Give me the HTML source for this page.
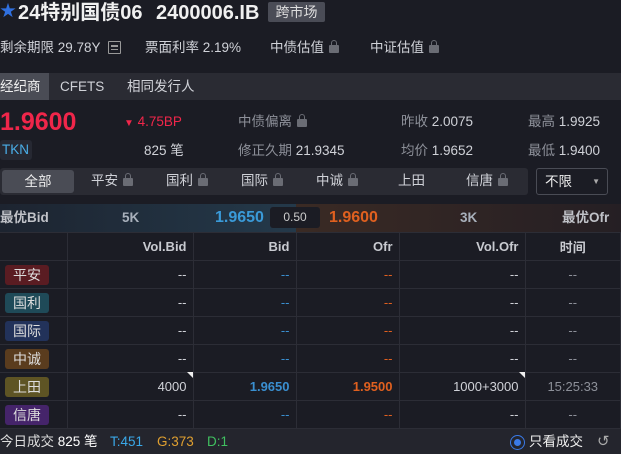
<!DOCTYPE html><html><head><meta charset="utf-8"><style>
*{margin:0;padding:0;box-sizing:border-box}
body{width:621px;height:454px;overflow:hidden;background:#1b1c24;color:#d0d2d8;font-family:"Liberation Sans","Noto Sans CJK SC",sans-serif;font-size:13.5px;position:relative}
.a{position:absolute;white-space:nowrap;line-height:18px}
.g{color:#8d9099}
.lk{display:inline-block;width:10px;height:8px;background:#6a6c74;border-radius:1px;position:relative;margin-left:5px;vertical-align:-1px}
.lk:before{content:"";position:absolute;left:1.5px;top:-5px;width:4px;height:5px;border:1.5px solid #6a6c74;border-bottom:none;border-radius:3px 3px 0 0}
table{border-collapse:collapse;position:absolute;left:0;top:232px;width:621px;table-layout:fixed}
td{border:1px solid #2c2d36;height:28px;text-align:right;padding-right:6px;font-size:13px;color:#d0d2d8}
tr td:first-child{border-left:none;text-align:left;padding-left:5px}
th{height:28px;border:1px solid #2c2d36;text-align:right;padding-right:6px;font-size:13px;color:#c8cad0;font-weight:bold}
.b{color:#3a8fd0}.o{color:#e0601f}
.bd{display:inline-block;width:44px;height:20px;border-radius:3px;text-align:center;line-height:20px;font-size:14px;color:#ddd}
.r{position:absolute;top:204px;height:28px;line-height:28px;white-space:nowrap;font-weight:bold}
</style></head><body>
<div class="a" style="left:0;top:3px;color:#3070e0;font-size:16px">★</div>
<div class="a" style="left:18px;top:1px;font-size:20px;line-height:24px;font-weight:bold;color:#f0f0f0">24特别国债06</div>
<div class="a" style="left:156px;top:1px;font-size:20px;line-height:24px;font-weight:bold;color:#f0f0f0">2400006.IB</div>
<div class="a" style="left:268px;top:2px;width:57px;height:20px;background:#4a4c56;border-radius:2px;text-align:center;line-height:20px;color:#ddd;font-size:14px">跨市场</div>
<div class="a" style="left:0;top:39px">剩余期限 29.78Y</div>
<div class="a" style="left:108px;top:41px;width:13px;height:13px;border:1.5px solid #999;border-radius:1px"><div style="margin:3px 2px 0;height:1.5px;background:#999"></div><div style="margin:2px 2px 0;height:1.5px;background:#999"></div></div>
<div class="a" style="left:145px;top:39px">票面利率 2.19%</div>
<div class="a" style="left:270px;top:39px">中债估值<span class="lk"></span></div>
<div class="a" style="left:370px;top:39px">中证估值<span class="lk"></span></div>
<div class="a" style="left:0;top:73px;width:621px;height:27px;background:#2a2b33"></div>
<div class="a" style="left:0;top:73px;width:49px;height:27px;background:#4a4c55;line-height:27px;color:#eee">经纪商</div>
<div class="a" style="left:60px;top:73px;line-height:27px">CFETS</div>
<div class="a" style="left:127px;top:73px;line-height:27px">相同发行人</div>
<div class="a" style="left:0;top:108px;font-size:25px;line-height:28px;font-weight:bold;color:#f0264a">1.9600</div>
<div class="a" style="left:124px;top:113px;color:#f0264a"><span style="font-size:10px">▼</span> 4.75BP</div>
<div class="a" style="left:0;top:140px;width:32px;height:20px;background:#262832;border-radius:3px;color:#4aaee8;line-height:20px;padding-left:2px">TKN</div>
<div class="a" style="left:144px;top:142px">825 笔</div>
<div class="a g" style="left:238px;top:113px">中债偏离<span class="lk"></span></div>
<div class="a" style="left:238px;top:142px"><span class="g">修正久期</span> 21.9345</div>
<div class="a" style="left:401px;top:113px"><span class="g">昨收</span> 2.0075</div>
<div class="a" style="left:401px;top:142px"><span class="g">均价</span> 1.9652</div>
<div class="a" style="left:528px;top:113px"><span class="g">最高</span> 1.9925</div>
<div class="a" style="left:528px;top:142px"><span class="g">最低</span> 1.9400</div>
<div class="a" style="left:0;top:168px;width:528px;height:27px;background:#2a2b33;border-radius:3px"></div>
<div class="a" style="left:2px;top:170px;width:72px;height:23px;background:#4a4c55;border-radius:3px;text-align:center;line-height:23px;color:#eee">全部</div>
<div class="a" style="left:91px;top:172px">平安<span class="lk"></span></div>
<div class="a" style="left:166px;top:172px">国利<span class="lk"></span></div>
<div class="a" style="left:241px;top:172px">国际<span class="lk"></span></div>
<div class="a" style="left:316px;top:172px">中诚<span class="lk"></span></div>
<div class="a" style="left:398px;top:172px">上田</div>
<div class="a" style="left:466px;top:172px">信唐<span class="lk"></span></div>
<div class="a" style="left:536px;top:168px;width:72px;height:27px;border:1px solid #4a4c55;border-radius:3px;line-height:25px;padding-left:8px;color:#eee">不限<span style="position:absolute;right:7px;font-size:8px;color:#aaa">▼</span></div>
<div class="a" style="left:0;top:204px;width:296px;height:28px;background:linear-gradient(90deg,#1d2430,#24394a)"></div>
<div class="a" style="left:296px;top:204px;width:325px;height:28px;background:linear-gradient(90deg,#3a2a24,#251f24)"></div>
<div class="r" style="left:0;color:#c0c2c8">最优Bid</div>
<div class="r" style="left:122px;color:#a8b0bb">5K</div>
<div class="r" style="left:215px;font-size:16px;color:#3a9ad8">1.9650</div>
<div class="a" style="left:270px;top:207px;width:50px;height:21px;background:#1b1c24;border-radius:3px;text-align:center;line-height:21px;font-size:12px;color:#ccc">0.50</div>
<div class="r" style="left:329px;font-size:16px;color:#e0601f">1.9600</div>
<div class="r" style="left:460px;color:#a8b0bb">3K</div>
<div class="r" style="left:562px;color:#c0c2c8">最优Ofr</div>
<table>
<colgroup><col style="width:67px"><col style="width:126px"><col style="width:103px"><col style="width:103px"><col style="width:126px"><col></colgroup>
<tr><th style="border-left:none"></th><th>Vol.Bid</th><th>Bid</th><th>Ofr</th><th>Vol.Ofr</th><th style="text-align:center;padding:0">时间</th></tr>
<tr><td><span class="bd" style="background:#5a1c22">平安</span></td><td>--</td><td class="b">--</td><td class="o">--</td><td>--</td><td style="text-align:center;padding:0" class="g">--</td></tr>
<tr><td><span class="bd" style="background:#1f4a58">国利</span></td><td>--</td><td class="b">--</td><td class="o">--</td><td>--</td><td style="text-align:center;padding:0" class="g">--</td></tr>
<tr><td><span class="bd" style="background:#22325a">国际</span></td><td>--</td><td class="b">--</td><td class="o">--</td><td>--</td><td style="text-align:center;padding:0" class="g">--</td></tr>
<tr><td><span class="bd" style="background:#5a3c1e">中诚</span></td><td>--</td><td class="b">--</td><td class="o">--</td><td>--</td><td style="text-align:center;padding:0" class="g">--</td></tr>
<tr><td><span class="bd" style="background:#5e5424">上田</span></td><td>4000</td><td class="b" style="font-weight:bold">1.9650</td><td class="o" style="font-weight:bold">1.9500</td><td>1000+3000</td><td style="text-align:center;padding:0" class="g">15:25:33</td></tr>
<tr><td><span class="bd" style="background:#45246a">信唐</span></td><td>--</td><td class="b">--</td><td class="o">--</td><td>--</td><td style="text-align:center;padding:0" class="g">--</td></tr>
</table>
<div class="a" style="left:187px;top:372px;width:0;height:0;border-left:6px solid transparent;border-top:6px solid #eee"></div>
<div class="a" style="left:519px;top:372px;width:0;height:0;border-left:6px solid transparent;border-top:6px solid #eee"></div>
<div class="a" style="left:0;top:429px;width:621px;height:25px;background:#24252d"></div>
<div class="a" style="left:0;top:433px;color:#ddd">今日成交 <span style="color:#fff">825 笔</span></div>
<div class="a" style="left:110px;top:433px;color:#3aa8e8">T:451</div>
<div class="a" style="left:157px;top:433px;color:#e0a030">G:373</div>
<div class="a" style="left:207px;top:433px;color:#40c060">D:1</div>
<div class="a" style="left:510px;top:435px;width:15px;height:15px;border:1.5px solid #3a7ae8;border-radius:50%"><div style="margin:2.5px;width:7px;height:7px;background:#3a7ae8;border-radius:50%"></div></div>
<div class="a" style="left:529px;top:433px;color:#eee">只看成交</div>
<div class="a" style="left:597px;top:433px;color:#aaa;font-size:15px">↺</div>
</body></html>
